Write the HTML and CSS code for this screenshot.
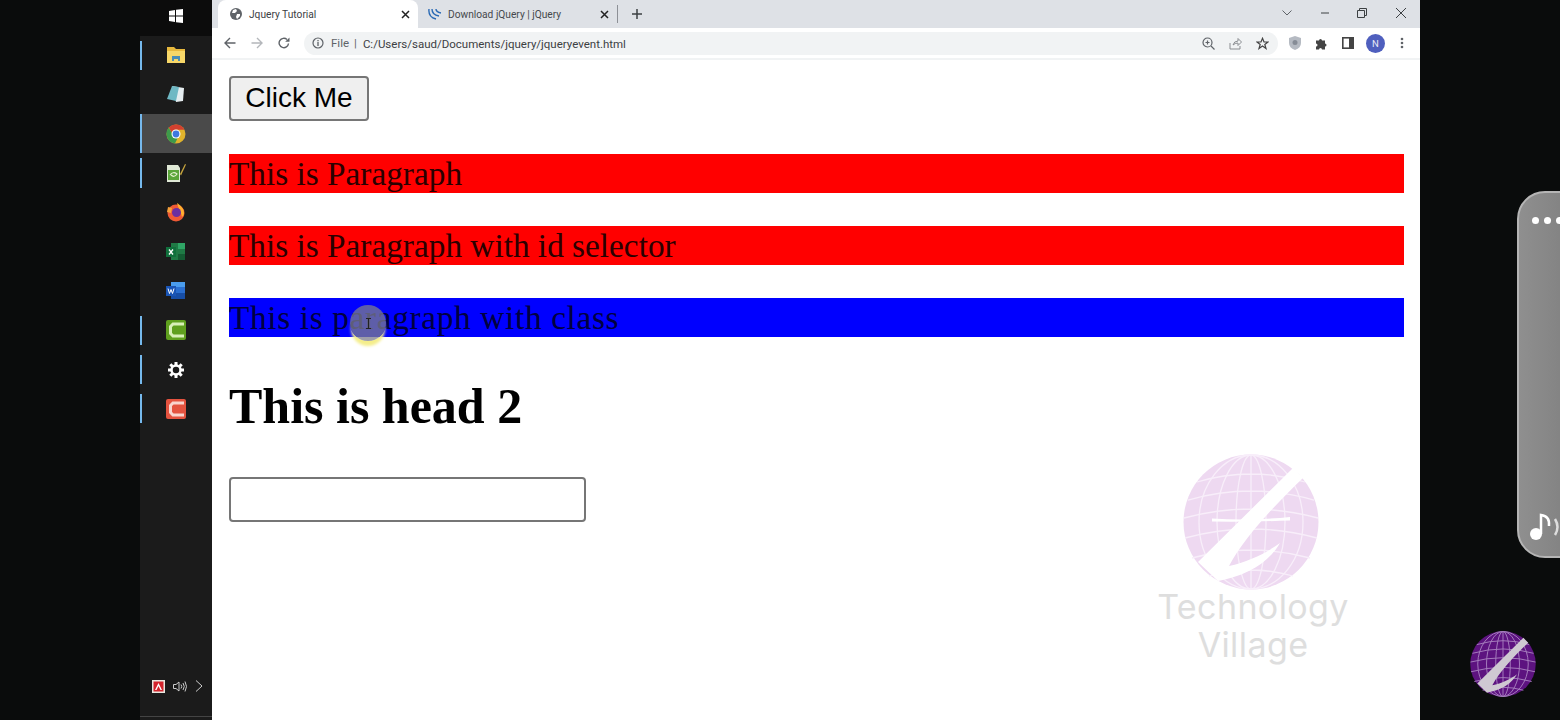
FILE: index.html
```html
<!DOCTYPE html>
<html lang="en">
<head>
    <meta charset="UTF-8">
    <meta name="viewport" content="width=device-width, initial-scale=1.0">
    <title>Jquery Tutorial</title>
    <link rel="stylesheet" href="styles.css">
</head>
<body>
    <div class="screen">
        <!-- Windows taskbar, docked on the left -->
        <aside class="taskbar">
            <div class="start">
                <svg width="14" height="14" viewBox="0 0 14 14"><path fill="#fff" d="M0 2 6 1V6.500H0ZM7 .8 14 0V6.500H7ZM0 7.500H6V13L0 12ZM7 7.500H14V14L7 13.200Z"/></svg>
            </div>
            <div class="task running">
                <svg width="20" height="20" viewBox="0 0 20 20"><path fill="#e8b93e" d="M1 2h7l2 2h9v3H1z"/><path fill="#f7d768" d="M1 6h18v12H1z"/><path fill="#4a8db5" d="M6 11h8v5h-2v-2H8v2H6z"/></svg>
            </div>
            <div class="task">
                <svg width="20" height="20" viewBox="0 0 20 20"><path fill="#e6edf0" d="M6 2 18 4 17 17 10 18z"/><path fill="#6fb8c4" d="M6 2 13 3 10 17 1 15z"/></svg>
            </div>
            <div class="task running active">
                <svg width="20" height="20" viewBox="0 0 20 20"><circle cx="10" cy="10" r="9.500" fill="#e0b32c"/><path fill="#d2402f" d="M10 .5a9.500 9.500 0 0 1 8.500 5.200H10a4.300 4.300 0 0 0-4.100 3L2.800 3.800A9.500 9.500 0 0 1 10 .5z"/><path fill="#3d9a4b" d="M2.800 3.800 7 11a4.300 4.300 0 0 0 4.600 3.200l-2.700 5.200A9.500 9.500 0 0 1 2.800 3.800z"/><circle cx="10" cy="10" r="4.500" fill="#fff"/><circle cx="10" cy="10" r="3.400" fill="#3f78e0"/></svg>
            </div>
            <div class="task running">
                <svg width="20" height="20" viewBox="0 0 20 20"><path fill="#dfe8d5" d="M1 2h11l2 3v14H1z"/><path fill="#5aa53a" d="M2 7h11v10H2z"/><path fill="none" stroke="#e3f0d0" stroke-width="1.200" d="M4 12q3-4 7-1-3 4-6 1"/><path fill="#c9a73f" d="M14 11 19 1l1 .5-5 11z"/></svg>
            </div>
            <div class="task">
                <svg width="20" height="20" viewBox="0 0 20 20"><circle cx="10" cy="11" r="8.500" fill="#ef5a35"/><path fill="#ffb02e" d="M11 1c3 2 7 5 7 10 0 2-1 3-2 4-1-6-4-9-5-14z"/><path fill="#f5a03a" d="M2 5l4 1-1 5-4-1z"/><circle cx="10.500" cy="10.500" r="4.500" fill="#6a2fa0"/></svg>
            </div>
            <div class="task">
                <svg width="20" height="20" viewBox="0 0 20 20"><path fill="#1f7a45" d="M5 1h14v17H5z"/><path fill="#2fa565" d="M12 1h7v6h-7z"/><path fill="#145c33" d="M12 12h7v6h-7z"/><path fill="#10703c" d="M0 5h10v10H0z"/><path fill="none" stroke="#fff" stroke-width="1.300" d="M3 7.500l4 5M7 7.500l-4 5"/></svg>
            </div>
            <div class="task">
                <svg width="20" height="20" viewBox="0 0 20 20"><path fill="#2a6fd0" d="M5 1h14v17H5z"/><path fill="#4a9cec" d="M5 1h14v5H5z"/><path fill="#174ea6" d="M5 12h14v6H5z"/><path fill="#1a55b5" d="M0 5h10v10H0z"/><path fill="none" stroke="#fff" stroke-width="1" d="M2 7.500l1.500 5L5 8.500l1.500 4 1.500-5"/></svg>
            </div>
            <div class="task running">
                <svg width="20" height="20" viewBox="0 0 20 20"><rect width="20" height="20" rx="2" fill="#5fa01e"/><path fill="none" stroke="#d8f0b8" stroke-width="3" d="M18 4H7L4.500 6.500v7L7 16h11"/></svg>
            </div>
            <div class="task running">
                <svg width="18" height="18" viewBox="0 0 18 18"><circle cx="9" cy="9" r="4.500" fill="none" stroke="#fff" stroke-width="2.500"/><path fill="none" stroke="#fff" stroke-width="3" d="M9 1v3M9 14v3M1 9h3M14 9h3M3.300 3.300l2.200 2.200M12.500 12.500l2.200 2.200M3.300 14.700l2.200-2.200M12.500 5.500l2.200-2.200"/></svg>
            </div>
            <div class="task running">
                <svg width="20" height="20" viewBox="0 0 20 20"><rect width="20" height="20" rx="2" fill="#e4533f"/><path fill="none" stroke="#f8d5ce" stroke-width="3" d="M18 4H7L4.500 6.500v7L7 16h11"/></svg>
            </div>
            <div class="tray">
                <svg width="13" height="13" viewBox="0 0 13 13"><rect width="13" height="13" fill="#e8e8e0"/><rect x="1.500" y="1.500" width="10" height="10" fill="#d3242c"/><path fill="#fff" d="M6.500 3 10 10H8.500L6.500 6 4.500 10H3z"/></svg>
                <svg width="14" height="13" viewBox="0 0 14 13"><path fill="none" stroke="#ccc" d="M.5 4.500h2.500L6 2v9L3 8.500H.5zM8 4.500q1.500 2 0 4M10 3q2.500 3.500 0 7M12 1.500q3 5 0 10"/></svg>
                <svg width="8" height="12" viewBox="0 0 8 12"><path fill="none" stroke="#ccc" d="M1 .5 7 6 1 11.500"/></svg>
            </div>
        </aside>

        <main class="browser">
            <div class="tabstrip">
                <div class="tab tab-active">
                    <svg width="12" height="12" viewBox="0 0 12 12"><circle cx="6" cy="6" r="6" fill="#5f6368"/><path fill="#fff" d="M3 2 6 1l1 2-2 2-3 0zM7 6h3l0 2-3 3-1-2z"/></svg>
                    <span class="tab-title">Jquery Tutorial</span>
                    <svg class="tab-close" width="9" height="9" viewBox="0 0 9 9"><path stroke="#222" stroke-width="1.500" d="M1 1l7 7M8 1 1 8"/></svg>
                </div>
                <div class="tab">
                    <svg width="14" height="12" viewBox="0 0 14 12"><path fill="none" stroke="#2a6ab5" stroke-width="1.400" d="M1 1q-1 8 7 10M4 1q0 6 7 7M8 1q0 3 5 4"/></svg>
                    <span class="tab-title">Download jQuery | jQuery</span>
                    <svg class="tab-close" width="9" height="9" viewBox="0 0 9 9"><path stroke="#222" stroke-width="1.500" d="M1 1l7 7M8 1 1 8"/></svg>
                </div>
                <span class="tab-sep"></span>
                <span class="tab-new">
                    <svg width="12" height="12" viewBox="0 0 12 12"><path stroke="#3c4043" stroke-width="1.500" d="M6 1v10M1 6h10"/></svg>
                </span>
                <div class="win-btns">
                    <svg width="10" height="6" viewBox="0 0 10 6"><path fill="none" stroke="#5f6368" d="M.5.5 5 5 9.500.5"/></svg>
                    <svg width="10" height="10" viewBox="0 0 10 10"><path stroke="#3c4043" d="M1 5h8"/></svg>
                    <svg width="10" height="10" viewBox="0 0 10 10"><path fill="none" stroke="#3c4043" d="M.5 2.500h7v7h-7zM2.500 2.500v-2h7v7h-2"/></svg>
                    <svg width="12" height="12" viewBox="0 0 12 12"><path stroke="#3c4043" d="M1 1l10 10M11 1 1 11"/></svg>
                </div>
            </div>

            <div class="toolbar">
                <svg width="12" height="12" viewBox="0 0 12 12"><path fill="none" stroke="#5f6368" stroke-width="1.400" d="M11.500 6H1M6 1 1 6l5 5"/></svg>
                <svg width="12" height="12" viewBox="0 0 12 12"><path fill="none" stroke="#b4b7bb" stroke-width="1.400" d="M.5 6H11M6 1l5 5-5 5"/></svg>
                <svg width="12" height="12" viewBox="0 0 12 12"><path fill="none" stroke="#5f6368" stroke-width="1.400" d="M10.500 6.500A4.700 4.700 0 1 1 9 2.500"/><path fill="#5f6368" d="M11.500 .5v4.300H7.200z"/></svg>
                <div class="omnibox">
                    <svg width="12" height="12" viewBox="0 0 12 12"><circle cx="6" cy="6" r="5" fill="none" stroke="#5f6368" stroke-width="1.200"/><path stroke="#5f6368" stroke-width="1.300" d="M6 5v4M6 3v1.300"/></svg>
                    <span class="scheme">File</span>
                    <span class="scheme-sep">|</span>
                    <span class="url">C:/Users/saud/Documents/jquery/jqueryevent.html</span>
                    <span class="omni-icons">
                        <svg width="13" height="13" viewBox="0 0 13 13"><circle cx="5.500" cy="5.500" r="4.500" fill="none" stroke="#5f6368" stroke-width="1.200"/><path stroke="#5f6368" stroke-width="1.200" d="M9 9l3.500 3.500M3.500 5.500h4M5.500 3.500v4"/></svg>
                        <svg width="13" height="13" viewBox="0 0 13 13"><path fill="none" stroke="#8a8d91" d="M1 6v6h10V9M4 8q1-4 5-4V1.500L12.500 5 9 8.500V6q-3 0-5 2z"/></svg>
                        <svg width="13" height="13" viewBox="0 0 13 13"><path fill="none" stroke="#444" stroke-width="1.200" d="M6.500 1.300 8 5h4l-3.200 2.500 1.200 4-3.500-2.400L3 11.500l1.200-4L1 5h4z"/></svg>
                    </span>
                </div>
                <div class="ext-icons">
                    <svg width="12" height="14" viewBox="0 0 12 14"><path fill="#b5bac2" d="M6 0 12 2v5q0 5-6 7-6-2-6-7V2z"/><circle cx="6" cy="6.500" r="2.500" fill="#868c96"/></svg>
                    <svg width="13" height="13" viewBox="0 0 13 13"><path fill="#444" d="M1 3.500h3a1.500 1.500 0 0 1 3 0h3v3a1.500 1.500 0 0 1 0 3v3H7a1.500 1.500 0 0 0-3 0H1V9.500a1.500 1.500 0 0 0 0-3z"/></svg>
                    <svg width="12" height="12" viewBox="0 0 12 12"><rect x=".8" y=".8" width="10.400" height="10.400" fill="#fff" stroke="#444" stroke-width="1.600"/><path fill="#444" d="M7 1h4v10H7z"/></svg>
                    <span class="avatar">N</span>
                    <svg width="4" height="12" viewBox="0 0 4 12"><circle cx="2" cy="2" r="1.300" fill="#5f6368"/><circle cx="2" cy="6" r="1.300" fill="#5f6368"/><circle cx="2" cy="10" r="1.300" fill="#5f6368"/></svg>
                </div>
            </div>

            <!-- the page under test -->
            <div class="page">
                <button class="big-btn" type="button">Click Me</button>
                <p class="red">This is Paragraph</p>
                <p class="red">This is Paragraph with id selector</p>
                <p class="blue">This is paragraph with class</p>
                <h2 class="head">This is head 2</h2>
                <input class="big-input" type="text">
            </div>

            <div class="cursor-dot">
                <svg width="7" height="11" viewBox="0 0 7 11"><path fill="none" stroke="#222" d="M1 .5h5M3.500.5v10M1 10.500h5"/></svg>
            </div>

            <div class="watermark">
                <svg class="wm-globe" width="136" height="136" viewBox="0 0 136 136">
                    <circle cx="68" cy="68" r="67.500" fill="#eed9f1"/>
                    <g fill="none" stroke="#f8eefa" stroke-width="1.300">
                        <ellipse cx="68" cy="68" rx="15" ry="67"/>
                        <ellipse cx="68" cy="68" rx="34" ry="67"/>
                        <ellipse cx="68" cy="68" rx="52" ry="67"/>
                        <path d="M68 1v134M14 28q54-16 108 0M5 46q63-18 126 0M1 64q67-18 134 0M2 84q66-18 132 0M9 104q59-16 118 0M26 122q42-12 84 0"/>
                    </g>
                    <path fill="#fff" d="M110 14 120 24C95 48 62 82 46 112 65 108 85 98 97 89 85 110 62 122 35 127L15 108Z"/>
                    <path fill="#fff" d="M29 64.500Q68 67 107 63V66.500Q68 68 29 67.500Z"/>
                </svg>
                <span class="wm-text">Technology<br>Village</span>
            </div>
        </main>

        <div class="side-pill">
            <div class="pill-dots"><i></i><i></i><i></i></div>
            <svg class="pill-note" width="42" height="30" viewBox="0 0 42 30"><circle cx="8" cy="23" r="6" fill="#fff"/><path fill="none" stroke="#fff" stroke-width="2.500" d="M13 23V4q9 1 8 11"/><path fill="none" stroke="#ddd" stroke-width="2.500" d="M27 8q5 8 0 16M33 8l8 16"/></svg>
        </div>

        <svg class="corner-logo" width="66" height="66" viewBox="0 0 136 136">
            <circle cx="68" cy="68" r="67.500" fill="#5d1380"/>
            <g fill="none" stroke="#a57dbd" stroke-width="2">
                <ellipse cx="68" cy="68" rx="15" ry="67"/>
                <ellipse cx="68" cy="68" rx="34" ry="67"/>
                <ellipse cx="68" cy="68" rx="52" ry="67"/>
                <path d="M68 1v134M14 28q54-16 108 0M5 46q63-18 126 0M1 64q67-18 134 0M2 84q66-18 132 0M9 104q59-16 118 0M26 122q42-12 84 0"/>
            </g>
            <path fill="#cfc9d2" d="M110 14 120 24C95 48 62 82 46 112 65 108 85 98 97 89 85 110 62 122 35 127L15 108Z"/>
        </svg>
    </div>
</body>
</html>
```

FILE: styles.css
```css
* {
    box-sizing: border-box;
}
html, body {
    margin: 0;
    height: 100%;
    overflow: hidden;
}
body {
    background-color: #0a0c0c;
    font-family: Roboto, "Liberation Sans", sans-serif;
}
.screen {
    position: relative;
    width: 1560px;
    height: 720px;
    padding-left: 140px;
    display: flex;
}

/* taskbar */
.taskbar {
    width: 72px;
    height: 720px;
    background-color: #1b1b1b;
    display: flex;
    flex-direction: column;
    flex-shrink: 0;
}
.start {
    height: 35.500px;
    background-color: #0c0c0c;
    display: flex;
    align-items: center;
    justify-content: center;
    padding-bottom: 3px;
    flex-shrink: 0;
}
.task {
    height: 39.300px;
    display: flex;
    align-items: center;
    justify-content: center;
    position: relative;
    flex-shrink: 0;
}
.task.running::before {
    content: "";
    position: absolute;
    left: 0;
    top: 5px;
    bottom: 5px;
    width: 2px;
    background-color: #76b9ed;
}
.task.active {
    background-color: #4a4a4a;
}
.task.active::before {
    top: 0;
    bottom: 0;
}
.tray {
    margin-top: auto;
    margin-bottom: 3px;
    height: 56px;
    padding: 19px 9px 0 12px;
    display: flex;
    align-items: flex-start;
    justify-content: space-between;
    border-bottom: 1px solid #444;
}

/* browser */
.browser {
    position: relative;
    width: 1208px;
    height: 720px;
    background-color: #fff;
    display: flex;
    flex-direction: column;
}
.tabstrip {
    height: 28px;
    background-color: #dee1e6;
    display: flex;
    align-items: center;
    padding-left: 6px;
    flex-shrink: 0;
}
.tab {
    width: 199px;
    height: 28px;
    display: flex;
    align-items: center;
    gap: 6px;
    padding: 0 8px 0 10px;
    font-size: 10.200px;
    color: #45484c;
}
.tab-active {
    background-color: #fff;
    border-radius: 8px 8px 0 0;
    color: #3c4043;
    width: 200px;
    gap: 7px;
    padding: 0 8px 0 12px;
}
.tab-title {
    flex: 1;
    white-space: nowrap;
}
.tab-sep {
    width: 1px;
    height: 18px;
    background-color: #8d9096;
}
.tab-new {
    margin-left: 13px;
    display: flex;
}
.win-btns {
    margin-left: auto;
    width: 138px;
    padding-right: 13px;
    display: flex;
    justify-content: space-between;
    align-items: center;
    margin-top: -2px;
}
.toolbar {
    height: 32px;
    border-bottom: 2px solid #f1f3f4;
    display: flex;
    align-items: center;
    gap: 15px;
    padding-left: 12px;
    flex-shrink: 0;
}
.omnibox {
    width: 974px;
    height: 23px;
    background-color: #f1f3f4;
    border-radius: 12px;
    margin-left: -1px;
    padding-left: 8px;
    display: flex;
    align-items: center;
    font-size: 11.500px;
    color: #3c4043;
}
.scheme {
    margin-left: 7px;
    color: #5f6368;
}
.scheme-sep {
    margin: 0 6px 0 5px;
    color: #5f6368;
}
.url {
    padding-top: 1px;
}
.omni-icons {
    margin-left: auto;
    margin-right: 9px;
    display: flex;
    gap: 14px;
    align-items: center;
}
.ext-icons {
    margin-left: -4px;
    display: flex;
    align-items: center;
    gap: 14px;
}
.avatar {
    width: 19px;
    height: 19px;
    border-radius: 50%;
    background-color: #4f5fbe;
    color: #e8eaf6;
    font-size: 9.500px;
    margin: 0 1px 0 -2px;
    display: flex;
    align-items: center;
    justify-content: center;
}

/* page content */
.page {
    padding: 16px 16px 0 17px;
    font-family: "Liberation Serif", serif;
    color: #000;
}
.big-btn {
    display: block;
    width: 140px;
    height: 45px;
    background-color: #efefef;
    border: 2px solid #767676;
    border-radius: 4px;
    font-family: "Liberation Sans", sans-serif;
    font-size: 28px;
    color: #000;
    padding: 0 0 2px;
}
.page p {
    margin: 33.300px 0;
    padding-top: 2px;
    font-size: 33.300px;
    line-height: 36.700px;
}
.red {
    background-color: #f00;
    color: #2a0000;
}
.page .blue {
    background-color: #00f;
    color: #000040;
    letter-spacing: .66px;
}
.head {
    margin: 40.300px 0 42px;
    font-size: 50px;
    line-height: 58px;
    font-weight: bold;
}
.big-input {
    display: block;
    width: 357px;
    height: 45px;
    border: 2px solid #767676;
    border-radius: 4px;
    background-color: #fff;
}

/* recorder's cursor highlight */
.cursor-dot {
    position: absolute;
    left: 138px;
    top: 305px;
    width: 36px;
    height: 36px;
    border-radius: 50%;
    background-color: rgba(125, 125, 140, .75);
    box-shadow: 0 6px 3px -1px #f5ee8a;
    display: flex;
    align-items: center;
    justify-content: center;
    padding-top: 1px;
}

/* watermark */
.watermark {
    position: absolute;
    left: 941px;
    top: 454px;
    width: 200px;
    display: flex;
    flex-direction: column;
    align-items: center;
}
.wm-globe {
    margin-right: 4px;
}
.wm-text {
    font-family: Inter, "Open Sans", sans-serif;
    font-size: 34px;
    font-weight: 400;
    letter-spacing: .4px;
    line-height: 38px;
    color: #dedede;
    text-align: center;
    margin-top: -2px;
}

/* floating bits on the right of the screen */
.side-pill {
    position: absolute;
    left: 1517px;
    top: 191px;
    width: 70px;
    height: 367px;
    border: 2px solid #b5b5b5;
    border-radius: 28px;
    background: linear-gradient(90deg, #8f8f8f, #7d7d7d);
    overflow: hidden;
}
.pill-dots {
    display: flex;
    gap: 5px;
    padding: 24px 0 0 13px;
}
.pill-dots i {
    width: 7px;
    height: 7px;
    border-radius: 50%;
    background-color: #fff;
}
.pill-note {
    position: absolute;
    left: 9px;
    top: 318px;
}
.corner-logo {
    position: absolute;
    left: 1470px;
    top: 631px;
}
```
